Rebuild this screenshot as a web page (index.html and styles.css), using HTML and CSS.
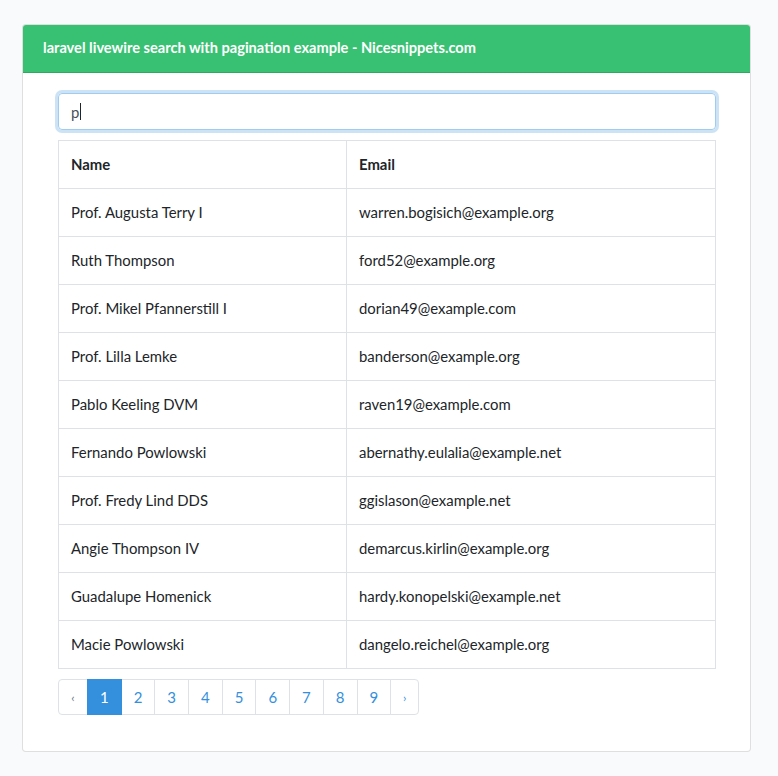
FILE: index.html
```html
<!DOCTYPE html>
<html>
<head>
<meta charset="utf-8">
<link rel="stylesheet" href="styles.css">
</head>
<body>
<div class="card">
  <div class="card-header">laravel livewire search with pagination example - Nicesnippets.com</div>
  <div class="card-body">
    <div class="search"><span class="typed">p</span><span class="caret"></span></div>
    <table class="table">
      <colgroup><col class="c1"><col class="c2"></colgroup>
      <thead>
        <tr><th>Name</th><th>Email</th></tr>
      </thead>
      <tbody>
        <tr><td>Prof. Augusta Terry I</td><td>warren.bogisich@example.org</td></tr>
        <tr><td>Ruth Thompson</td><td>ford52@example.org</td></tr>
        <tr><td>Prof. Mikel Pfannerstill I</td><td>dorian49@example.com</td></tr>
        <tr><td>Prof. Lilla Lemke</td><td>banderson@example.org</td></tr>
        <tr><td>Pablo Keeling DVM</td><td>raven19@example.com</td></tr>
        <tr><td>Fernando Powlowski</td><td>abernathy.eulalia@example.net</td></tr>
        <tr><td>Prof. Fredy Lind DDS</td><td>ggislason@example.net</td></tr>
        <tr><td>Angie Thompson IV</td><td>demarcus.kirlin@example.org</td></tr>
        <tr><td>Guadalupe Homenick</td><td>hardy.konopelski@example.net</td></tr>
        <tr><td>Macie Powlowski</td><td>dangelo.reichel@example.org</td></tr>
      </tbody>
    </table>
    <ul class="pagination">
      <li class="page disabled arrow first">‹</li>
      <li class="page active">1</li>
      <li class="page">2</li>
      <li class="page">3</li>
      <li class="page">4</li>
      <li class="page">5</li>
      <li class="page">6</li>
      <li class="page">7</li>
      <li class="page">8</li>
      <li class="page">9</li>
      <li class="page arrow last">›</li>
    </ul>
  </div>
</div>
</body>
</html>
```
FILE: styles.css
```css
html, body {
  margin: 0;
  padding: 0;
}
body {
  background: #f8fafc;
  font-family: Lato, "Noto Sans", sans-serif;
  font-size: 14.9px;
  color: #212529;
  padding: 24px 0 0 22px;
  height: 776px;
  box-sizing: border-box;
}
.card {
  width: 729px;
  box-sizing: border-box;
  background: #fff;
  border: 1px solid rgba(0,0,0,0.125);
  border-radius: 4px;
}
.card-header {
  background: #38c172;
  color: #fff;
  font-weight: 700;
  font-size: 14.6px;
  padding: 11px 20px 13px;
  line-height: 23px;
  border-bottom: 1px solid #2fa862;
  border-radius: 3px 3px 0 0;
}
.card-body {
  padding: 20px 34px 20px 35px;
}
.search {
  height: 37px;
  box-sizing: border-box;
  border: 1px solid #a1cbef;
  border-radius: 4px;
  box-shadow: 0 0 0 3px rgba(52,144,220,0.25);
  padding: 0 12px;
  display: flex;
  align-items: center;
  color: #495057;
}
.caret {
  display: inline-block;
  width: 1px;
  height: 17px;
  background: #212529;
  margin-left: 1px;
}
.table {
  width: 100%;
  margin-top: 10px;
  border-collapse: collapse;
  table-layout: fixed;
}
.c1 { width: 288px; }
.table th, .table td {
  border: 1px solid #dee2e6;
  padding: 0 12px 2px;
  height: 48px;
  text-align: left;
  box-sizing: border-box;
}
.table th { font-weight: 700; }
.pagination {
  list-style: none;
  margin: 10px 0 16px;
  padding: 0;
  display: flex;
}
.page {
  height: 36px;
  width: 34.7px;
  box-sizing: border-box;
  display: flex;
  align-items: center;
  justify-content: center;
  border: 1px solid #dee2e6;
  margin-left: -1px;
  color: #3490dc;
  background: #fff;
  font-size: 15px;
}
.page.first {
  margin-left: 0;
  border-radius: 4px 0 0 4px;
  width: 30px;
}
.page.last { border-radius: 0 4px 4px 0; width: 29px; }
.page.disabled { color: #6c757d; }
.page.active {
  background: #3490dc;
  border-color: #3490dc;
  color: #fff;
  position: relative;
  z-index: 1;
}
.arrow { font-size: 12px; }
```
